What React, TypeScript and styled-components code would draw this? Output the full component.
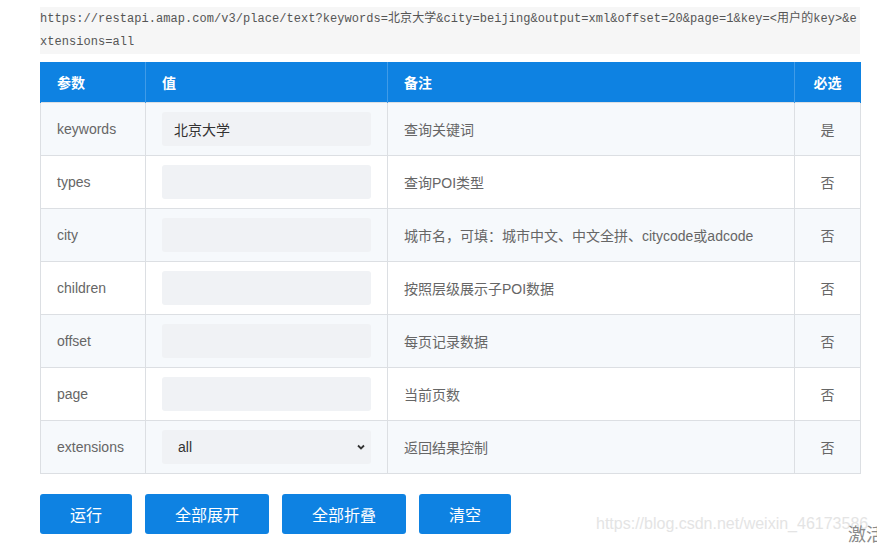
import React from 'react'
import styled, { createGlobalStyle } from 'styled-components'

const GlobalStyle = createGlobalStyle`
  html, body {
    margin: 0;
    padding: 0;
    background: #fff;
  }
  body {
    width: 877px;
    height: 544px;
    overflow: hidden;
    font-family: "Liberation Sans", Arial, "Noto Sans CJK SC", sans-serif;
  }
`

interface Param {
    name: string;
    value?: string;
    note: string;
    required: boolean;
    select?: boolean;
}

const params: Param[] = [
    { name: 'keywords', value: '北京大学', note: '查询关键词', required: true },
    { name: 'types', note: '查询POI类型', required: false },
    { name: 'city', note: '城市名，可填：城市中文、中文全拼、citycode或adcode', required: false },
    { name: 'children', note: '按照层级展示子POI数据', required: false },
    { name: 'offset', note: '每页记录数据', required: false },
    { name: 'page', note: '当前页数', required: false },
    { name: 'extensions', value: 'all', note: '返回结果控制', required: false, select: true },
]

const buttons = [
    { label: '运行', width: 92 },
    { label: '全部展开', width: 124 },
    { label: '全部折叠', width: 124 },
    { label: '清空', width: 92 },
]

const App = () => {
    return (
        <Page>
            <GlobalStyle />
            <CodeBlock>
                https://restapi.amap.com/v3/place/text?keywords=北京大学&amp;city=beijing&amp;output=xml&amp;offset=20&amp;page=1&amp;key=&lt;用户的key&gt;&amp;extensions=all
            </CodeBlock>
            <Table>
                <colgroup>
                    <col style={{ width: 105 }} />
                    <col style={{ width: 242 }} />
                    <col style={{ width: 407 }} />
                    <col style={{ width: 66 }} />
                </colgroup>
                <thead>
                    <tr>
                        <Th>参数</Th>
                        <Th>值</Th>
                        <Th>备注</Th>
                        <Th $center>必选</Th>
                    </tr>
                </thead>
                <tbody>
                    {params.map((p, i) => (
                        <Row key={p.name} $odd={i % 2 === 0}>
                            <Td>{p.name}</Td>
                            <Td>
                                {p.select ? (
                                    <SelectWrap>
                                        <Select defaultValue={p.value}>
                                            <option value="all">all</option>
                                            <option value="base">base</option>
                                        </Select>
                                        <Chevron viewBox="0 0 10 10">
                                            <path d="M2 3.5 L5 6.5 L8 3.5" fill="none" stroke="#333" strokeWidth="1.8" />
                                        </Chevron>
                                    </SelectWrap>
                                ) : (
                                    <Input defaultValue={p.value ?? ''} />
                                )}
                            </Td>
                            <Td>{p.note}</Td>
                            <Td $center>{p.required ? '是' : '否'}</Td>
                        </Row>
                    ))}
                </tbody>
            </Table>
            <ButtonBar>
                {buttons.map(b => (
                    <Button key={b.label} $width={b.width}>{b.label}</Button>
                ))}
            </ButtonBar>
            <Watermark>https://blog.csdn.net/weixin_46173586</Watermark>
            <Activate>激活</Activate>
        </Page>
    )
}

const Page = styled.div`
    position: relative;
    width: 877px;
    height: 544px;
    padding: 7px 17px 0 40px;
    box-sizing: border-box;
`

const CodeBlock = styled.div`
    background: #f6f6f6;
    color: #555;
    font-family: "Liberation Mono", "Noto Sans CJK SC", monospace;
    font-size: 12px;
    letter-spacing: 0.05px;
    line-height: 23px;
    padding: 1px 0 0 0;
    word-break: break-all;
    height: 47px;
    box-sizing: border-box;
`

const Table = styled.table`
    margin-top: 8px;
    width: 820px;
    border-collapse: collapse;
    table-layout: fixed;
    font-size: 14px;
`

const Th = styled.th<{ $center?: boolean }>`
    background: #0e82e2;
    color: #fff;
    font-weight: 700;
    height: 40px;
    padding: 0 16px;
    text-align: ${p => (p.$center ? 'center' : 'left')};
    border-left: 1px solid #3f9be8;
    &:first-child {
        border-left: 1px solid #0e82e2;
    }
    &:last-child {
        border-right: 1px solid #0e82e2;
    }
`

const Row = styled.tr<{ $odd: boolean }>`
    background: ${p => (p.$odd ? '#f6f9fc' : '#fff')};
`

const Td = styled.td<{ $center?: boolean }>`
    height: 52px;
    padding: 0 16px;
    color: #666;
    border: 1px solid #dcdfe3;
    text-align: ${p => (p.$center ? 'center' : 'left')};
    white-space: nowrap;
`

const Input = styled.input`
    display: block;
    width: 209px;
    height: 34px;
    box-sizing: border-box;
    border: none;
    border-radius: 3px;
    background: #f0f2f5;
    padding: 0 12px;
    font-family: "Liberation Sans", Arial, "Noto Sans CJK SC", sans-serif;
    font-size: 14px;
    color: #333;
    outline: none;
`

const SelectWrap = styled.div`
    position: relative;
    width: 209px;
`

const Select = styled.select`
    display: block;
    width: 209px;
    height: 34px;
    border: none;
    border-radius: 3px;
    background: #f0f2f5;
    padding: 0 16px;
    appearance: none;
    font-family: "Liberation Sans", Arial, sans-serif;
    font-size: 14px;
    color: #333;
    outline: none;
`

const Chevron = styled.svg`
    position: absolute;
    right: 5px;
    top: 12px;
    width: 10px;
    height: 10px;
    pointer-events: none;
`

const ButtonBar = styled.div`
    display: flex;
    gap: 13px;
    margin-top: 20px;
`

const Button = styled.button<{ $width: number }>`
    width: ${p => p.$width}px;
    height: 40px;
    border: none;
    border-radius: 3px;
    background: #0e82e2;
    color: #fff;
    font-family: "Noto Sans CJK SC", sans-serif;
    font-size: 16px;
    cursor: pointer;
`

const Watermark = styled.div`
    position: absolute;
    left: 596px;
    top: 515px;
    font-family: "Liberation Sans", Arial, sans-serif;
    font-size: 16px;
    color: #e4e4e4;
    white-space: nowrap;
`

const Activate = styled.div`
    position: absolute;
    left: 848px;
    top: 520px;
    font-family: "Noto Sans CJK SC", sans-serif;
    font-size: 18px;
    color: #8a8a8a;
    white-space: nowrap;
`

export default App
